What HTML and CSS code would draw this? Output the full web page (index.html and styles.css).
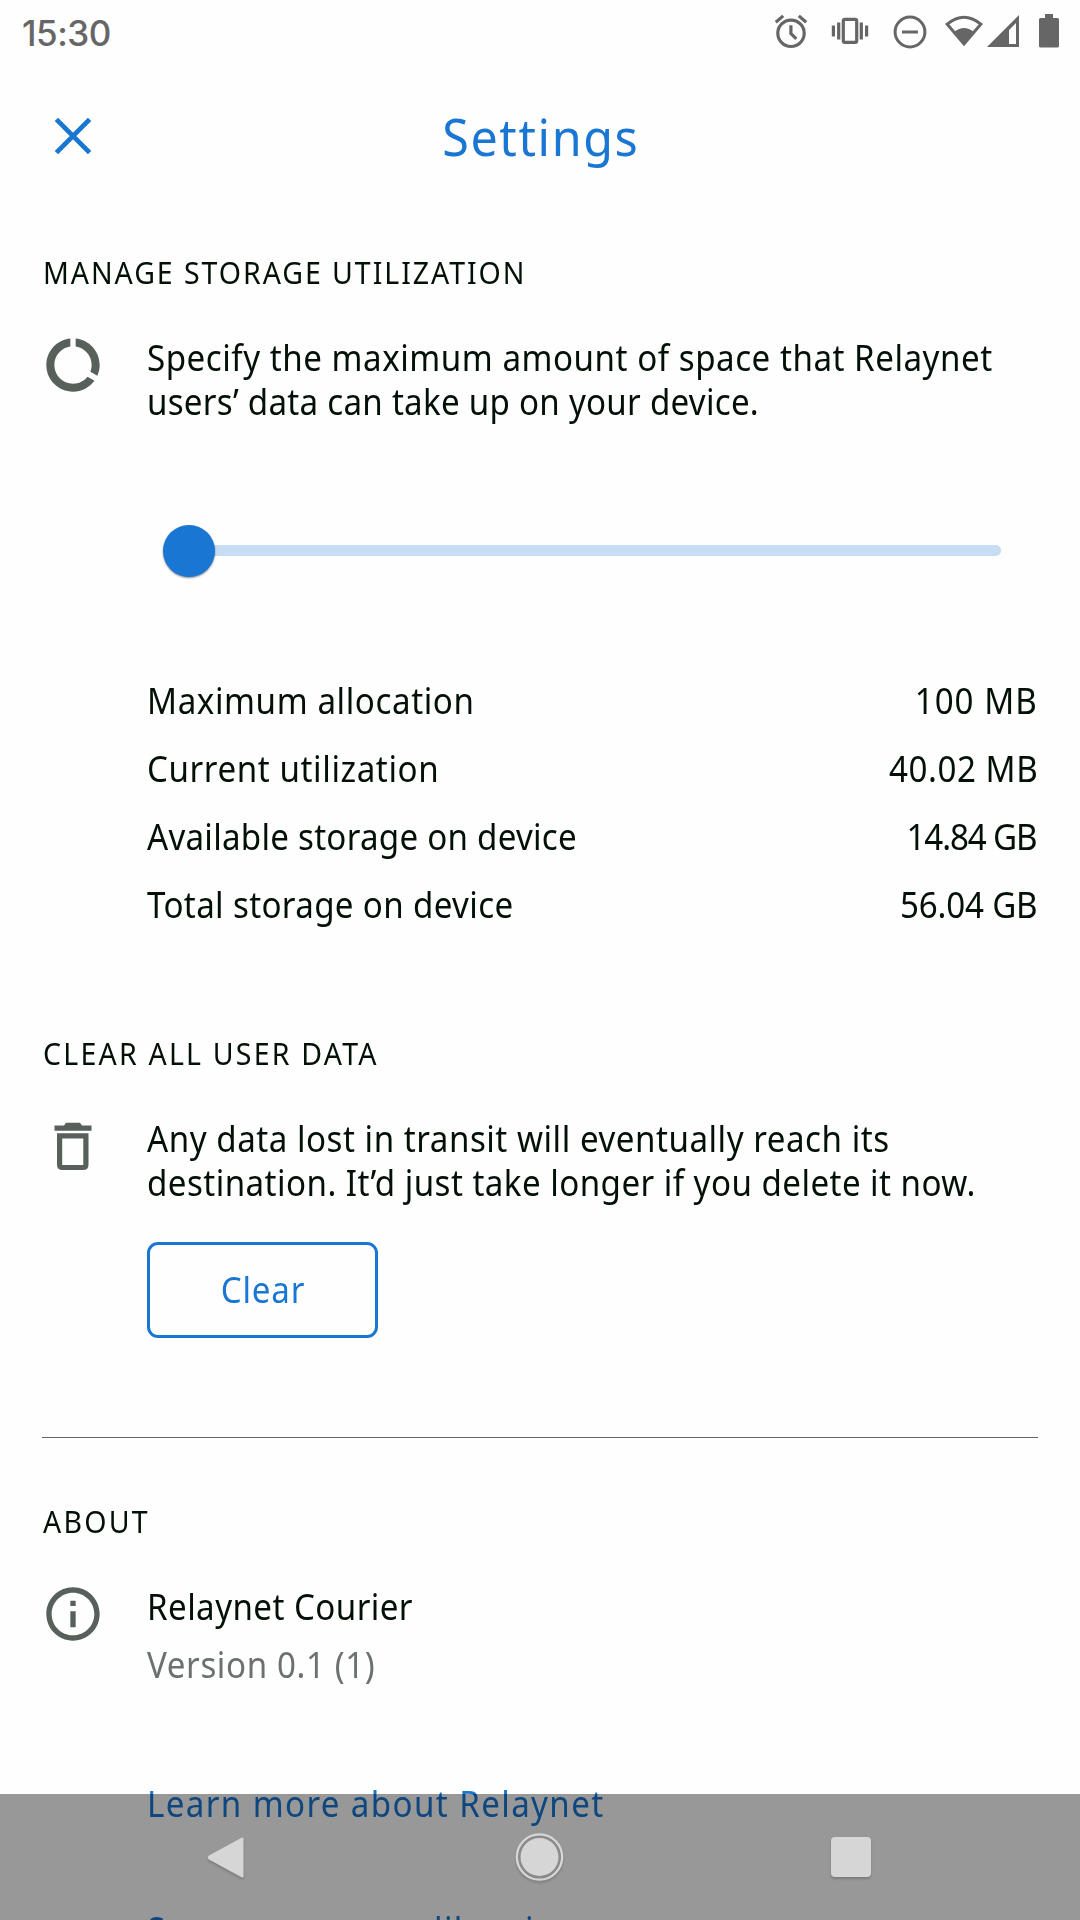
FILE: index.html
```html
<!DOCTYPE html>
<html lang="en">
<head>
<meta charset="utf-8">
<title>Settings</title>
<link rel="stylesheet" href="styles.css">
</head>
<body>
<div class="screen">
  <div class="status">
    <span class="clock">15:30</span>
    <div class="status-icons">
      <svg class="st-alarm" width="34" height="36" viewBox="0 0 34 36" fill="none" stroke="#666" stroke-width="3.2">
        <circle cx="17" cy="19.3" r="13.2"/><path d="M16.9 11.3v8.3l5.4 5.2M1.8 8.2l7.4-6.3M24.8 1.9l7.4 6.3"/>
      </svg>
      <svg class="st-vibrate" width="38" height="28" viewBox="0 0 38 28" fill="none" stroke="#666" stroke-width="3.2">
        <rect x="12.3" y="2.4" width="13.4" height="23" rx="1.6"/><path d="M7.7 5.5v17M2.4 8.500v11M30.3 5.500v17M35.600 8.500v11"/>
      </svg>
      <svg class="st-dnd" width="34" height="34" viewBox="0 0 34 34" fill="none" stroke="#666" stroke-width="3">
        <circle cx="17" cy="17" r="14.9"/><path d="M9 17h16"/>
      </svg>
      <svg class="st-wifi" width="40" height="34" viewBox="0 0 40 34">
        <path d="M3.2 10.2Q20-3.6 36.8 10.2L20 30z" fill="none" stroke="#666" stroke-width="3"/>
        <path d="M10.2 18q9.8-8 19.6 0L20 30.5z" fill="#666"/>
      </svg>
      <svg class="st-signal" width="34" height="34" viewBox="0 0 34 34" fill="#666">
        <path fill-rule="evenodd" d="M1 33L33 1v32zM23 16v14h7V9z"/>
      </svg>
      <svg class="st-battery" width="20" height="34" viewBox="0 0 20 34" fill="#666">
        <path d="M6 0h8v4h4.500q1.500 0 1.500 1.500V32q0 1.600-1.600 1.600H1.600Q0 33.600 0 32V5.500Q0 4 1.500 4H6z"/>
      </svg>
    </div>
  </div>

  <header class="appbar">
    <svg class="close" width="38" height="38" viewBox="0 0 38 38" fill="none" stroke="#1976d2" stroke-width="4.800"><path d="M2.400 2.400l33.200 33.200M35.600 2.400L2.400 35.600"/></svg>
    <h1 class="title">Settings</h1>
    <span></span>
  </header>

  <main class="content">
    <section>
      <h2 class="heading heading-storage">MANAGE STORAGE UTILIZATION</h2>
      <div class="entry">
        <svg class="icon" width="64" height="64" viewBox="0 0 24 24" fill="#58605b"><path d="M13 2.050v3.030c3.390.490 6 3.390 6 6.920 0 .900-.180 1.750-.480 2.540l2.600 1.530c.560-1.240.880-2.620.880-4.070 0-5.180-3.950-9.450-9-9.950zM12 19c-3.870 0-7-3.130-7-7 0-3.530 2.610-6.430 6-6.920V2.050c-5.060.500-9 4.760-9 9.950 0 5.520 4.470 10 9.990 10 3.310 0 6.240-1.610 8.060-4.090l-2.600-1.530C16.170 17.980 14.210 19 12 19z"/></svg>
        <div class="body">
          <p class="text"><span class="line specify">Specify the maximum amount of space that Relaynet</span><span class="line users">users’ data can take up on your device.</span></p>
          <div class="slider"><div class="track"></div><div class="thumb"></div></div>
          <dl class="stats">
            <div class="stat"><dt class="line maximum">Maximum allocation</dt><dd class="value value-allocation">100 MB</dd></div>
            <div class="stat"><dt class="line current">Current utilization</dt><dd class="value">40.02 MB</dd></div>
            <div class="stat"><dt class="line">Available storage on device</dt><dd class="value value-available">14.84 GB</dd></div>
            <div class="stat"><dt class="line total">Total storage on device</dt><dd class="value value-total">56.04 GB</dd></div>
          </dl>
        </div>
      </div>
    </section>

    <section class="clear-section">
      <h2 class="heading">CLEAR ALL USER DATA</h2>
      <div class="entry">
        <svg class="icon" width="64" height="64" viewBox="0 0 64 64"><path d="M13.500 11.500H23L25 8.800h14l2 2.700h9.500v5.300h-37z" fill="#58605b"/><path d="M18.600 21.900h26.300V50.700q0 2.800-2.800 2.800H21.400q-2.800 0-2.800-2.800z" fill="none" stroke="#58605b" stroke-width="5.200"/></svg>
        <div class="body">
          <p class="text"><span class="line any">Any data lost in transit will eventually reach its</span><span class="line destination">destination. It’d just take longer if you delete it now.</span></p>
          <button class="button" type="button"><span class="button-label">Clear</span></button>
        </div>
      </div>
    </section>

    <hr class="divider">

    <section>
      <h2 class="heading">ABOUT</h2>
      <div class="entry">
        <svg class="icon" width="64" height="64" viewBox="0 0 24 24" fill="#58605b"><path d="M11 7h2v2h-2zm0 4h2v6h-2zm1-9C6.480 2 2 6.480 2 12s4.480 10 10 10 10-4.480 10-10S17.520 2 12 2zm0 18c-4.410 0-8-3.590-8-8s3.590-8 8-8 8 3.590 8 8-3.590 8-8 8z"/></svg>
        <div class="body">
          <p class="line courier">Relaynet Courier</p>
          <p class="line version">Version 0.1 (1)</p>
          <a class="line link link-first">Learn more about Relaynet</a>
          <a class="line link link-next">See open source libraries</a>
        </div>
      </div>
    </section>
  </main>

  <nav class="navbar">
    <svg class="nav-icon" width="60" height="60" viewBox="0 0 60 60"><path d="M13 28.500Q10.500 30.500 13 32.500L46 50.500q1.500.500 1.500-1.500V12q0-2-1.500-1.500z" fill="#d6d6d6"/></svg>
    <svg class="nav-icon" width="60" height="60" viewBox="0 0 60 60"><circle cx="30.500" cy="30" r="22.600" fill="none" stroke="#d6d6d6" stroke-width="2.400"/><circle cx="30.500" cy="30" r="20" fill="none" stroke="#8c8c8c" stroke-width="2"/><circle cx="30.500" cy="30" r="19" fill="#d6d6d6"/></svg>
    <svg class="nav-icon" width="60" height="60" viewBox="0 0 60 60"><rect x="10" y="10" width="40" height="40" rx="4" fill="#d6d6d6"/></svg>
  </nav>
</div>
</body>
</html>
```
FILE: styles.css
```css
* { box-sizing: border-box; }

body, h1, h2, p, dl, dt, dd { margin: 0; }

body {
  background: #fefefe;
  color: #021006;
  font: 36px/44px "Noto Sans", "Open Sans", sans-serif;
}

.screen {
  position: relative;
  width: 1080px;
  height: 1920px;
  overflow: hidden;
}

/* System status bar */
.status {
  display: flex;
  justify-content: space-between;
  height: 64px;
  padding: 11px 21px 0 22px;
  color: #666;
}

.clock {
  font: 500 35px/44px Inter, sans-serif;
  letter-spacing: -0.500px;
}

.status-icons { display: flex; }
.st-alarm { margin: 3px 23px 0 0; }
.st-vibrate { margin: 6px 24px 0 0; }
.st-dnd { margin: 4px 17px 0 0; }
.st-wifi { margin: 3px 2px 0 0; }
.st-signal { margin: 3px 19px 0 0; }
.st-battery { margin: 3px 0 0 0; }

/* App bar */
.appbar {
  display: grid;
  grid-template-columns: 60px 1fr 60px;
  align-items: center;
  height: 144px;
  padding: 0 43px;
}

.close {
  display: block;
  margin: 0 0 0 11px;
}

.title {
  justify-self: center;
  padding-left: 1px;
  color: #1976d2;
  font-size: 51px;
  font-weight: 400;
  line-height: 60px;
  letter-spacing: 1.700px;
  transform: scaleX(0.95);
}

.content { padding: 48px 42px 0 43px; }

/* Condensed text lines */
.heading {
  font-size: 31px;
  font-weight: 400;
  line-height: 32px;
  letter-spacing: 2.400px;
  white-space: nowrap;
  transform: scaleX(0.92);
  transform-origin: left;
}

.line {
  display: block;
  letter-spacing: 0.280px;
  white-space: nowrap;
  transform: scaleX(0.92);
  transform-origin: left;
}

.heading-storage { letter-spacing: 2.100px; }
.specify { letter-spacing: 0.570px; }
.users { letter-spacing: 0.290px; }
.maximum, .current { letter-spacing: 0.640px; }
.total { letter-spacing: 0.380px; }
.any { letter-spacing: 0.570px; }
.destination { letter-spacing: 0.490px; }

.entry {
  display: grid;
  grid-template-columns: 104px 891px;
  margin-top: 47px;
}

.icon {
  display: block;
  margin: -2px 0 0 -2px;
}

.body { padding-top: 1px; }

/* Allocation slider */
.slider {
  display: grid;
  align-items: center;
  height: 52px;
  margin: 101px 37px 0 16px;
}

.track, .thumb { grid-area: 1 / 1; }

.track {
  height: 11px;
  margin: 0 0 1px 20px;
  border-radius: 5px;
  background: #c7ddf4;
}

.thumb {
  width: 52px;
  height: 52px;
  border-radius: 50%;
  background: #1976d2;
  box-shadow: 0 1px 2px rgba(0, 0, 0, 0.45);
}

.stats {
  display: grid;
  gap: 24px;
  margin-top: 102px;
}

.stat {
  display: flex;
  justify-content: space-between;
}

.value {
  letter-spacing: 0.600px;
  white-space: nowrap;
  transform: scaleX(0.92);
  transform-origin: right;
}

.value-allocation { letter-spacing: 1.100px; }
.value-available { padding-right: 2px; letter-spacing: -1.200px; }
.value-total { padding-right: 1px; letter-spacing: -0.200px; }

.clear-section { margin-top: 110px; }

.button {
  display: grid;
  place-items: center;
  width: 231px;
  height: 96px;
  margin-top: 37px;
  padding: 0;
  border: 3px solid #1976d2;
  border-radius: 11px;
  background: transparent;
  color: #1976d2;
  font: inherit;
}

.button-label {
  letter-spacing: 0.900px;
  transform: scaleX(0.92);
}

.divider {
  height: 1px;
  margin: 99px 0 67px -1px;
  border: 0;
  background: #666;
}

.courier { letter-spacing: 0.470px; }

.version {
  margin-top: 14px;
  color: #6b726e;
  letter-spacing: 0.660px;
}

.link { color: #1976d2; letter-spacing: 1.500px; }
.link-first { margin-top: 95px; }
.link-next { margin-top: 82px; }

/* System navigation overlay */
.navbar {
  position: absolute;
  inset: auto 0 0 0;
  display: flex;
  justify-content: space-between;
  height: 126px;
  padding: 33px 199px 0 196px;
  background: rgba(0, 0, 0, 0.4);
}

.nav-icon { filter: drop-shadow(0 2px 1px rgba(0, 0, 0, 0.18)); }
```
